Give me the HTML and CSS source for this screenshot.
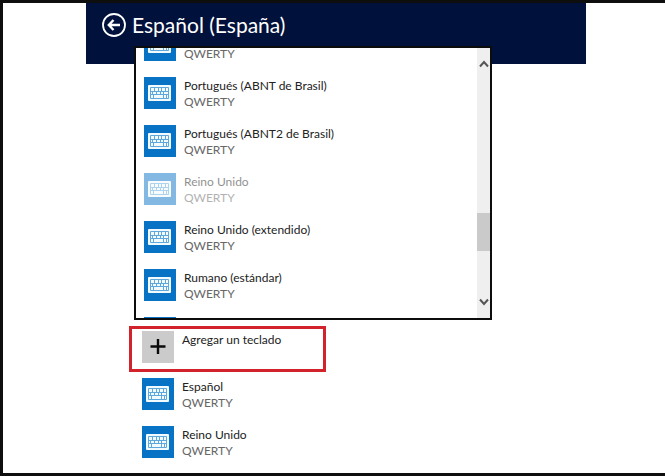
FILE: index.html
```
<!DOCTYPE html>
<html lang="es">
  <head>
    <meta charset="UTF-8" />
    <meta name="viewport" content="width=device-width, initial-scale=1.0" />
    <title>Español (España)</title>
    <link rel="stylesheet" href="styles.css">
  </head>
  <body>
    <!-- shared keyboard icon -->
    <svg class="defs" aria-hidden="true">
      <symbol id="keyboard" viewBox="0 0 32 32">
        <rect x="4" y="8" width="23" height="16" rx="1" fill="#f2fbff" />
        <path d="M6.500 10.500h18v11h-18zM6.500 14.500h18M6.500 17.500h18M10.500 10.500v4M14.500 10.500v4M17.500 10.500v4M21.500 10.500v4M8.500 14.500v3M12.500 14.500v3M16.500 14.500v3M19.500 14.500v3M9.500 17.500v4M19.500 17.500v4M22.500 17.500v4" fill="none" stroke="#5fa8dc" />
      </symbol>
    </svg>

    <main class="screen">
      <div class="panel">
        <header class="header">
          <button class="back" type="button" aria-label="Atrás">
            <svg viewBox="0 0 24 24" width="24" height="24">
              <circle cx="12" cy="12" r="11" fill="none" stroke="#fff" stroke-width="1.8" />
              <path d="M18 12H7.500M11.500 7L6.800 12l4.700 5" fill="none" stroke="#fff" stroke-width="2.400" />
            </svg>
          </button>
          <h1>Español (España)</h1>
        </header>

        <div class="picker">
          <ul class="list picker-list">
            <li><button class="item" type="button">
              <svg class="icon"><use href="#keyboard" /></svg>
              <span class="text"><span class="layout">QWERTY</span></span>
            </button></li>
            <li><button class="item" type="button">
              <svg class="icon"><use href="#keyboard" /></svg>
              <span class="text"><span class="name">Portugués (ABNT de Brasil)</span><span class="layout">QWERTY</span></span>
            </button></li>
            <li><button class="item" type="button">
              <svg class="icon"><use href="#keyboard" /></svg>
              <span class="text"><span class="name">Portugués (ABNT2 de Brasil)</span><span class="layout">QWERTY</span></span>
            </button></li>
            <li><button class="item" type="button" disabled>
              <svg class="icon"><use href="#keyboard" /></svg>
              <span class="text"><span class="name">Reino Unido</span><span class="layout">QWERTY</span></span>
            </button></li>
            <li><button class="item" type="button">
              <svg class="icon"><use href="#keyboard" /></svg>
              <span class="text"><span class="name">Reino Unido (extendido)</span><span class="layout">QWERTY</span></span>
            </button></li>
            <li><button class="item" type="button">
              <svg class="icon"><use href="#keyboard" /></svg>
              <span class="text"><span class="name">Rumano (estándar)</span><span class="layout">QWERTY</span></span>
            </button></li>
            <li><span class="icon"></span></li>
          </ul>
          <div class="scrollbar">
            <button class="arrow" type="button" aria-label="Subir">
              <svg viewBox="0 0 10 8" width="10" height="8"><path d="M1 6.500L5 2l4 4.500" /></svg>
            </button>
            <div class="thumb"></div>
            <button class="arrow" type="button" aria-label="Bajar">
              <svg viewBox="0 0 10 8" width="10" height="8"><path d="M1 1.500L5 6l4-4.500" /></svg>
            </button>
          </div>
        </div>

        <div class="add">
          <button class="item" type="button">
            <svg class="icon plus" viewBox="0 0 32 32"><path d="M16 8v15M8.500 15.500h15" stroke="#0a0a0a" stroke-width="2.400" /></svg>
            <span class="text"><span class="name">Agregar un teclado</span></span>
          </button>
        </div>

        <ul class="list installed">
          <li><button class="item" type="button">
            <svg class="icon"><use href="#keyboard" /></svg>
            <span class="text"><span class="name">Español</span><span class="layout">QWERTY</span></span>
          </button></li>
          <li><button class="item" type="button">
            <svg class="icon"><use href="#keyboard" /></svg>
            <span class="text"><span class="name">Reino Unido</span><span class="layout">QWERTY</span></span>
          </button></li>
        </ul>
      </div>
    </main>
  </body>
</html>
```
FILE: styles.css
```
* {
  box-sizing: border-box;
}

body {
  margin: 0;
  font-family: Lato, "Open Sans", sans-serif;
  font-size: 12px;
  line-height: 16px;
  color: #222;
  background: #fff;
}

button {
  margin: 0;
  padding: 0;
  border: 0;
  background: none;
  font: inherit;
  color: inherit;
  text-align: left;
}

.defs {
  display: none;
}

.screen {
  min-height: 100vh;
  border: 3px solid #0e0e0e;
  border-right: 0;
  padding: 0 79px 0 83px;
}

.header {
  display: flex;
  align-items: center;
  gap: 6px;
  padding: 9px 16px 26px;
  background: #00113c;
  color: #fff;
}

.header h1 {
  margin: 0;
  font-size: 21px;
  font-weight: 400;
  line-height: 26px;
}

.back svg {
  display: block;
}

/* the flyout hangs over the lower edge of the header */
.picker {
  display: flex;
  justify-content: space-between;
  height: 274px;
  margin: -18px 94px 0 48px;
  border: 2px solid #0c0c0c;
  background: #fff;
  overflow: hidden;
}

.list {
  display: flex;
  flex-direction: column;
  gap: 16px;
  margin: 0;
  padding: 0;
  list-style: none;
}

.picker-list {
  margin-top: -19px;
  padding-left: 8px;
}

.item {
  display: flex;
  gap: 8px;
  height: 32px;
}

.item:disabled {
  opacity: 0.5;
}

.icon {
  display: block;
  flex: none;
  width: 32px;
  height: 32px;
  background: #0873c4;
}

.plus {
  background: #cbcbcb;
}

.text {
  display: flex;
  flex-direction: column;
  padding-top: 1px;
}

.layout {
  color: #666;
}

.layout:first-child {
  margin-top: 16px;
}

.scrollbar {
  display: flex;
  flex-direction: column;
  width: 13px;
  padding: 12px 0;
  background: #efefef;
}

.arrow {
  display: flex;
  justify-content: center;
}

.arrow path {
  fill: none;
  stroke: #555;
  stroke-width: 2;
}

.thumb {
  height: 38px;
  margin: 145px 0 auto;
  background: #cacaca;
}

.add {
  width: 197px;
  height: 46px;
  margin: 6px 0 0 43px;
  border: 3px solid #d2232d;
  padding: 2px 10px;
}

.installed {
  padding: 6px 0 12px 56px;
}
```
